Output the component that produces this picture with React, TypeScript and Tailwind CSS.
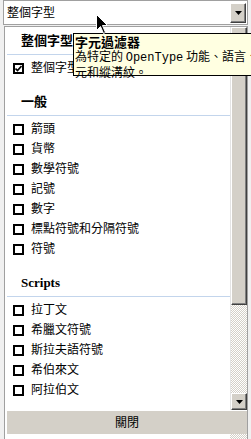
import React from 'react';

const sections = [
  { title: '整個字型', first: true, serif: false, items: [{ label: '整個字型', checked: true }] },
  {
    title: '一般',
    first: false,
    serif: false,
    items: ['箭頭', '貨幣', '數學符號', '記號', '數字', '標點符號和分隔符號', '符號'].map((label) => ({ label, checked: false })),
  },
  {
    title: 'Scripts',
    first: false,
    serif: true,
    items: ['拉丁文', '希臘文符號', '斯拉夫語符號', '希伯來文', '阿拉伯文'].map((label) => ({ label, checked: false })),
  },
];

const Checkbox = ({ checked }: { checked: boolean }) => (
  <div className="w-[11px] h-[11px] border-2 border-black bg-white flex items-center justify-center shrink-0">
    {checked && (
      <svg width="7" height="7" viewBox="0 0 7 7">
        <path d="M0.5 3.5 L2.5 5.5 L6.5 1" stroke="#000" strokeWidth="1.6" fill="none" />
      </svg>
    )}
  </div>
);

const Arrow = () => (
  <svg width="7" height="4" viewBox="0 0 7 4">
    <path d="M0 0 H7 L3.5 4 Z" fill="#000" />
  </svg>
);

const bevel =
  'bg-[#d4d0c8] border border-t-white border-l-white border-b-[#404040] border-r-[#404040] shadow-[inset_-1px_-1px_#808080]';

export default function App() {
  return (
    <div className="relative w-[251px] h-[439px] overflow-hidden bg-[#f0f0f0] font-['Liberation_Sans','Noto_Sans_CJK_TC',sans-serif] text-black">
      {/* combo */}
      <div className="ml-[3px] w-[245px] h-[25px] border border-[#a0a0a0] bg-white flex items-stretch pt-[2px] pb-[1px] pr-[1px]">
        <div className="flex-1 flex items-center pl-[3px] text-[12px] leading-none">整個字型</div>
        <div className={`w-[16px] flex items-center justify-center ${bevel}`}>
          <Arrow />
        </div>
      </div>

      {/* dropdown panel */}
      <div className="mt-[1px] ml-[4px] w-[244px] h-[413px] border border-[#a0a0a0] border-b-0 bg-white pl-[2px] flex flex-col">
        <div className="h-[383px] flex">
          <div className="flex-1 overflow-hidden">
            {sections.map((s) => (
              <div key={s.title} className={s.first ? '' : 'pt-[10px]'}>
                <div
                  className={`h-[27px] flex items-center pl-[14px] font-bold ${
                    s.serif ? "font-['Liberation_Serif',serif] text-[13px]" : 'text-[13px]'
                  }`}
                >
                  {s.title}
                </div>
                <div className="h-px bg-[#c3d5ec]" />
                <div className="pt-[3px]">
                  {s.items.map((it) => (
                    <div key={it.label} className="h-[20px] flex items-center gap-[7px] pl-[6px] text-[12px] leading-none">
                      <Checkbox checked={it.checked} />
                      <span>{it.label}</span>
                    </div>
                  ))}
                </div>
              </div>
            ))}
          </div>
          {/* scrollbar */}
          <div className="w-[17px] flex flex-col border-l border-[#e4e4e4]">
            <div className={`h-[16px] ${bevel}`} />
            <div className={`h-[262px] ${bevel}`} />
            <div className="flex-1 bg-[repeating-conic-gradient(#d4d0c8_0_25%,#ffffff_0_50%)] bg-size-[2px_2px]" />
            <div className={`h-[17px] flex items-center justify-center ${bevel}`}>
              <Arrow />
            </div>
          </div>
        </div>
        <div className="mt-[1px] h-[23px] bg-[#d4d0c8] flex items-center justify-center text-[12px] leading-none">
          關閉
        </div>
        <div className="flex-1 flex">
          <div className="flex-1 bg-white" />
          <div className="w-[17px] bg-[repeating-conic-gradient(#d4d0c8_0_25%,#ffffff_0_50%)] bg-size-[2px_2px]" />
        </div>
      </div>

      {/* tooltip */}
      <div className="absolute left-[73px] top-[33px] w-[200px] h-[43px] border border-black bg-[#ffffe1] pl-[1px] pt-[1px] whitespace-nowrap font-['Noto_Sans_CJK_TC',sans-serif]">
        <div className="text-[13px] font-bold leading-[14px]">字元過濾器</div>
        <div className="text-[12px] leading-[13px]">
          為特定的 <span className="font-['Liberation_Mono',monospace]">OpenType</span> 功能、語言、字
        </div>
        <div className="text-[12px] leading-[13px]">元和縱溝紋。</div>
      </div>

      {/* mouse cursor */}
      <svg className="absolute left-[96px] top-[14px]" width="13" height="21" viewBox="0 0 13 21">
        <path d="M0.5 0.5 V16.5 L4.5 12.5 L7.5 19.5 L9.5 18.5 L6.5 11.5 H11.5 Z" fill="#000" stroke="#fff" strokeWidth="1" />
      </svg>
    </div>
  );
}
